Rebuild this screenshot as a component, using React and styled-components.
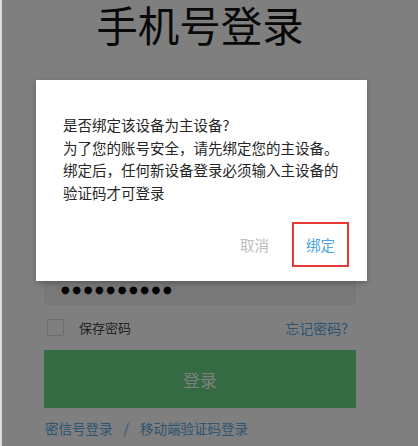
// Login page dimmed behind a "bind device" confirm dialog
import React from "react";
import styled, { createGlobalStyle } from "styled-components";

const GlobalStyle = createGlobalStyle`
  html, body {
    margin: 0;
    padding: 0;
    background: #ffffff;
  }
  body {
    font-family: "Noto Sans CJK SC", "Noto Sans", "Liberation Sans", sans-serif;
  }
`;

// Page frame
const Page = styled.div`
  position: relative;
  width: 418px;
  height: 446px;
  overflow: hidden;
  background: #ffffff;
  border-left: 2px solid #dcdcdc;
  box-sizing: border-box;
`;

// Login form column
const Column = styled.div`
  display: flex;
  flex-direction: column;
  width: 312px;
  margin-left: 42px;
`;

const Title = styled.h1`
  margin: 0;
  font-size: 41.5px;
  line-height: 48px;
  font-weight: 400;
  text-align: center;
  color: #111111;
`;

const Field = styled.div`
  display: flex;
  align-items: center;
  height: 35px;
  margin-top: ${({ gap }) => gap}px;
  padding-left: 17px;
  background: #f0f0f0;
  color: #000000;
  font-size: 15px;
`;

const Dots = styled.span`
  font-family: "DejaVu Sans", sans-serif;
  font-size: 10px;
  letter-spacing: 2.6px;
  margin-top: 4px;
`;

const OptionsRow = styled.div`
  display: flex;
  align-items: center;
  height: 19px;
  margin-top: 13px;
  padding: 0 8px 0 3px;
`;

const CheckBox = styled.span`
  width: 15px;
  height: 15px;
  border: 1.5px solid #d8d8d8;
  border-radius: 2px;
  background: #ffffff;
`;

const Label = styled.span`
  margin-left: 15px;
  font-size: 13px;
  color: #444444;
`;

const LinkText = styled.a`
  font-size: ${({ size }) => size || 13}px;
  color: #5aaae4;
  text-decoration: none;
  margin-left: ${({ push }) => (push ? "auto" : "0")};
`;

const LoginButton = styled.div`
  display: flex;
  align-items: center;
  justify-content: center;
  height: 58px;
  margin-top: 13px;
  background: #6ad684;
  color: #ffffff;
  font-size: 17px;
`;

const LinksRow = styled.div`
  display: flex;
  align-items: center;
  gap: 11px;
  height: 18px;
  margin-top: 11px;
  padding-left: 1px;
`;

const Slash = styled.span`
  font-size: 14px;
  color: #5aaae4;
`;

// Modal layer over the page
const Overlay = styled.div`
  position: absolute;
  inset: 0;
  background: rgba(0, 0, 0, 0.5);
  padding: 80px 0 0 34px;
`;

const Dialog = styled.div`
  display: flex;
  flex-direction: column;
  width: 331px;
  height: 201px;
  box-sizing: border-box;
  padding: 34px 18px 14px 27px;
  background: #ffffff;
  box-shadow: 0 2px 6px rgba(0, 0, 0, 0.25);
`;

const Message = styled.p`
  margin: 0;
  font-size: 14.5px;
  line-height: 22.5px;
  color: #262626;
`;

const Actions = styled.div`
  display: flex;
  justify-content: flex-end;
  gap: 9px;
  margin-top: auto;
`;

const ActionButton = styled.button`
  width: 57px;
  height: 45px;
  padding: 0;
  border: 2px solid ${({ marked }) => (marked ? "#e53935" : "transparent")};
  background: transparent;
  font-family: inherit;
  font-size: 14.5px;
  color: ${({ primary }) => (primary ? "#4aa3df" : "#bdbdbd")};
  cursor: pointer;
`;

export default function App() {
  return (
    <>
      <GlobalStyle />
      <Page>
        <Column>
          <Title>手机号登录</Title>
          <Field gap={167} />
          <Field gap={20}>
            <Dots>●●●●●●●●●●</Dots>
          </Field>
          <OptionsRow>
            <CheckBox />
            <Label>保存密码</Label>
            <LinkText push size={14}>忘记密码?</LinkText>
          </OptionsRow>
          <LoginButton>登录</LoginButton>
          <LinksRow>
            <LinkText size={13.5}>密信号登录</LinkText>
            <Slash>/</Slash>
            <LinkText size={13.5}>移动端验证码登录</LinkText>
          </LinksRow>
        </Column>
        <Overlay>
          <Dialog>
            <Message>
              是否绑定该设备为主设备?
              <br />
              为了您的账号安全，请先绑定您的主设备。
              <br />
              绑定后，任何新设备登录必须输入主设备的
              <br />
              验证码才可登录
            </Message>
            <Actions>
              <ActionButton>取消</ActionButton>
              <ActionButton primary marked>
                绑定
              </ActionButton>
            </Actions>
          </Dialog>
        </Overlay>
      </Page>
    </>
  );
}
